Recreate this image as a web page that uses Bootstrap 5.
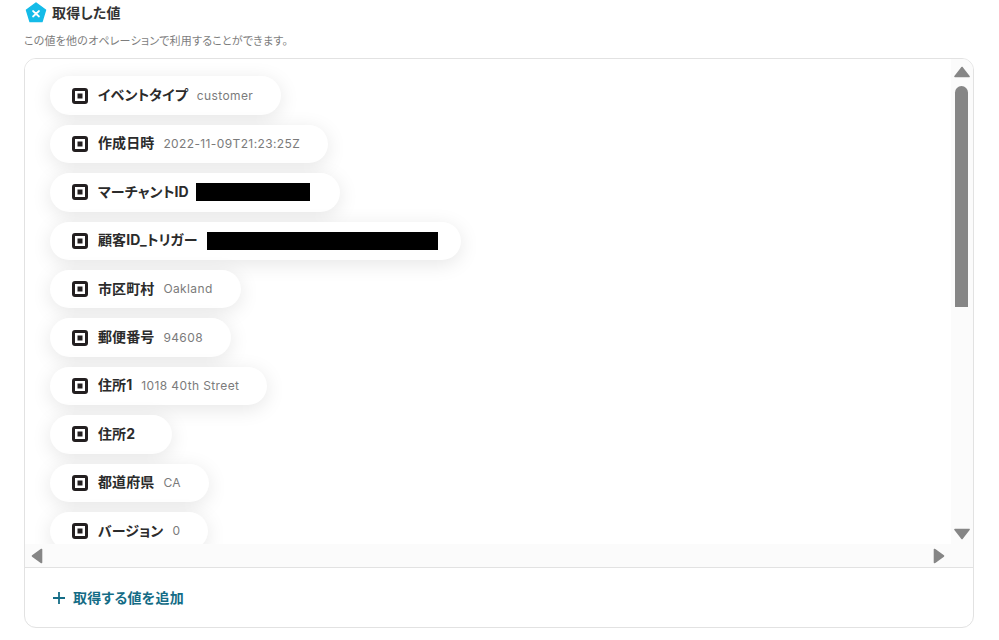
<!DOCTYPE html>
<html lang="ja">
<head>
    <meta charset="UTF-8">
    <title>取得した値</title>
    <link href="https://cdn.jsdelivr.net/npm/bootstrap@5.3.3/dist/css/bootstrap.min.css" rel="stylesheet">
    <style>
        body {
            background: #fff;
            font-family: Inter, "Noto Sans CJK JP", sans-serif;
            color: #2b2b2b;
            height: 640px;
            overflow: hidden;
        }
        .page-wrap { padding: 2px 25px 12px 24px; }
        .title-row { height: 22px; padding-left: 1px; }
        .title-text { font-size: 14px; font-weight: 700; color: #333; margin: 0 0 2px 5px; font-feature-settings: "palt"; letter-spacing: .2px; }
        .sub-text { font-size: 11px; color: #7d7d7d; margin-top: 10px; line-height: 14px; font-feature-settings: "palt"; letter-spacing: .2px; }
        .values-box { border: 1px solid #e2e2e2; border-radius: 12px; margin-top: 10px; height: 570px; overflow: hidden; }
        .scroll-main { height: 485px; }
        .pill-area { padding: 17.4px 0 0 25px; gap: 10px; overflow: hidden; background: #fff; }
        .value-pill {
            height: 38.4px;
            padding: 0 28px 0 22px;
            border-radius: 20px;
            background: #fff;
            box-shadow: 0 4px 20px rgba(0, 0, 0, .1);
            white-space: nowrap;
            flex-shrink: 0;
        }
        .pill-label { font-size: 14px; font-weight: 700; color: #2b2b2b; margin: 0 0 2px 10px; font-feature-settings: "palt"; letter-spacing: .1px; }
        .pill-value { font-size: 12px; color: #7b7b7b; margin-left: 9px; letter-spacing: .38px; }
        .redact { height: 18px; background: #000; }
        .vbar { width: 22px; background: #fbfbfb; padding-top: 7px; padding-right: 1px; }
        .vthumb { width: 13px; height: 221px; background: #868686; border-radius: 7px 7px 0 0; margin-top: 8px; }
        .hbar { height: 23px; background: #fbfbfb; padding: 0 28px 0 6px; }
        .add-row { height: 60px; border-top: 1px solid #e2e2e2; padding-left: 27px; color: #146c86; font-size: 14px; font-weight: 700; font-feature-settings: "palt"; letter-spacing: .25px; }
        .add-row span { margin-left: 7px; }
    </style>
</head>
<body>
    <div class="page-wrap">
        <div class="title-row d-flex align-items-center">
            <svg width="22" height="22" viewBox="0 0 22 22">
                <path d="M11 1 L20.5 8 L17 19.5 H5 L1.5 8 Z" fill="#14bbe8" stroke="#14bbe8" stroke-width="1.5" stroke-linejoin="round"/>
                <path d="M8 9 L14 14.5 M14 9 L8 14.5" stroke="#fff" stroke-width="1.7" stroke-linecap="round"/>
            </svg>
            <div class="title-text">取得した値</div>
        </div>
        <div class="sub-text">この値を他のオペレーションで利用することができます。</div>

        <div class="values-box">
            <div class="scroll-main d-flex">
                <div class="pill-area d-flex flex-column align-items-start flex-grow-1" id="pills"></div>
                <div class="vbar d-flex flex-column align-items-center">
                    <svg width="16" height="12" viewBox="0 0 16 12"><path d="M8 1.5 L15 10.5 H1 Z" fill="#868686" stroke="#868686" stroke-width="1.6" stroke-linejoin="round"/></svg>
                    <div class="vthumb"></div>
                    <div class="flex-grow-1"></div>
                    <svg class="mb-1" width="16" height="12" viewBox="0 0 16 12"><path d="M8 10.5 L15 1.5 H1 Z" fill="#868686" stroke="#868686" stroke-width="1.6" stroke-linejoin="round"/></svg>
                </div>
            </div>
            <div class="hbar d-flex align-items-center justify-content-between">
                <svg width="12" height="16" viewBox="0 0 12 16"><path d="M1.5 8 L10.5 1.5 V14.5 Z" fill="#868686" stroke="#868686" stroke-width="1.6" stroke-linejoin="round"/></svg>
                <svg width="12" height="16" viewBox="0 0 12 16"><path d="M10.5 8 L1.5 1.5 V14.5 Z" fill="#868686" stroke="#868686" stroke-width="1.6" stroke-linejoin="round"/></svg>
            </div>
            <div class="add-row d-flex align-items-center">
                <svg width="14" height="14" viewBox="0 0 14 14"><path d="M7 1 V13 M1 7 H13" stroke="#146c86" stroke-width="1.8"/></svg>
                <span>取得する値を追加</span>
            </div>
        </div>
    </div>

    <script>
        // label, value, redacted bar width, space before bar, extra space after the content
        const rows = [
            ["イベントタイプ", "customer", 0, 0, 0],
            ["作成日時", "2022-11-09T21:23:25Z", 0, 0, 0],
            ["マーチャントID", "", 114, 7, 2],
            ["顧客ID_トリガー", "", 231, 9, -5],
            ["市区町村", "Oakland", 0, 0, 0],
            ["郵便番号", "94608", 0, 0, 0],
            ["住所1", "1018 40th Street", 0, 0, 0],
            ["住所2", "", 0, 0, 9],
            ["都道府県", "CA", 0, 0, 0],
            ["バージョン", "0", 0, 0, 0]
        ];
        const icon = `<svg width="16" height="16" viewBox="0 0 16 16"><rect x="1.5" y="1.5" width="13" height="13" rx="1.5" fill="none" stroke="#231f20" stroke-width="3"/><rect x="5.5" y="5.5" width="5" height="5" fill="#231f20"/></svg>`;
        document.getElementById("pills").innerHTML = rows.map(([label, value, bar, gap, extra]) => `
            <div class="value-pill d-inline-flex align-items-center">
                ${icon}
                <span class="pill-label" style="margin-right: ${bar ? 0 : extra}px">${label}</span>
                ${value ? `<span class="pill-value">${value}</span>` : ""}
                ${bar ? `<span class="redact" style="width: ${bar}px; margin-left: ${gap}px; margin-right: ${extra}px"></span>` : ""}
            </div>`).join("");
    </script>
    <script src="https://cdn.jsdelivr.net/npm/bootstrap@5.3.3/dist/js/bootstrap.bundle.min.js"></script>
</body>
</html>
